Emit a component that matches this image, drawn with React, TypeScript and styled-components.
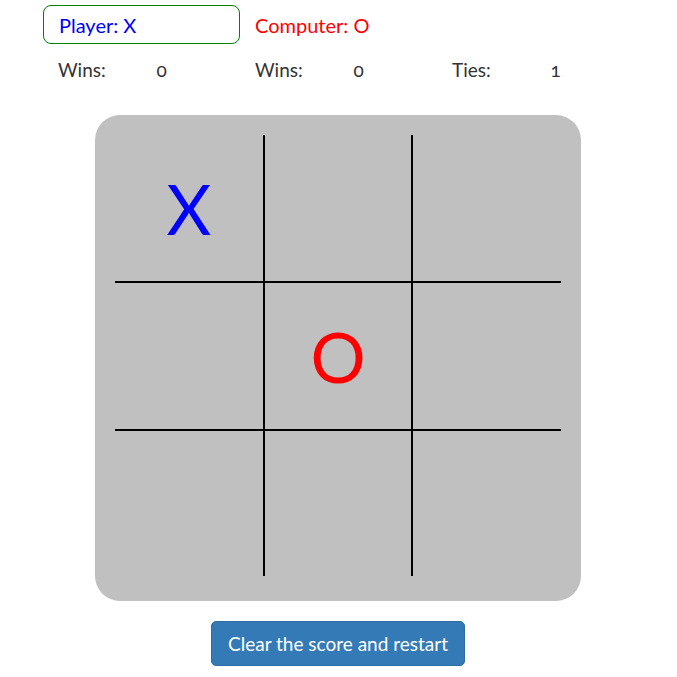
import React from "react";
import styled, { createGlobalStyle } from "styled-components";

const Global = createGlobalStyle`
  html, body { margin: 0; padding: 0; background: #fff; }
  body { font-family: "Lato", "Open Sans", "Liberation Sans", sans-serif; color: #333; }
`;

const Page = styled.div`
  width: 676px;
  padding-top: 5px;
  box-sizing: border-box;
`;

const Header = styled.div`
  display: flex;
  align-items: center;
  gap: 15px;
  padding-left: 43px;
`;

const PlayerBox = styled.div`
  width: 197px;
  height: 39px;
  box-sizing: border-box;
  border: 1px solid #008000;
  border-radius: 8px;
  padding-left: 15px;
  display: flex;
  align-items: center;
  font-size: 20px;
  color: #0000ff;
`;

const Label = styled.div<{ $color: string }>`
  font-size: 20px;
  color: ${(p) => p.$color};
`;

const Scores = styled.div`
  display: grid;
  grid-template-columns: repeat(6, 98.5px);
  padding-left: 58px;
  margin-top: 11px;
  height: 28px;
  align-items: center;
  font-size: 19px;
  color: #333;
`;

const Value = styled.span`
  font-size: 19px;
  font-variant-numeric: oldstyle-nums;
`;

const Board = styled.div`
  width: 486px;
  height: 486px;
  margin: 32px auto 0;
  box-sizing: border-box;
  background: #c0c0c0;
  border-radius: 25px;
  padding: 20px 20px 25px;
`;

const Grid = styled.div`
  display: grid;
  grid-template-columns: 148px 146px 148px;
  grid-template-rows: 146px 146px 145px;
  gap: 2px;
  background: #000;
`;

const Cell = styled.div<{ $mark?: "X" | "O" }>`
  background: #c0c0c0;
  display: flex;
  align-items: center;
  justify-content: center;
  font-size: 69px;
  font-weight: 400;
  line-height: 1;
  color: ${(p) => (p.$mark === "X" ? "#0000ff" : "#ff0000")};
`;

const Footer = styled.div`
  display: flex;
  justify-content: center;
  margin-top: 20px;
`;

const Button = styled.button`
  width: 254px;
  height: 45px;
  background: #337ab7;
  border: 1px solid #2e6da4;
  border-radius: 5px;
  color: #fff;
  font-family: inherit;
  font-size: 19px;
  cursor: pointer;
`;

const cells: ("X" | "O" | undefined)[] = ["X", undefined, undefined, undefined, "O", undefined, undefined, undefined, undefined];

export default function App() {
  return (
    <Page>
      <Global />
      <Header>
        <PlayerBox>Player: X</PlayerBox>
        <Label $color="#ff0000">Computer: O</Label>
      </Header>
      <Scores>
        <span>Wins:</span>
        <Value>0</Value>
        <span>Wins:</span>
        <Value>0</Value>
        <span>Ties:</span>
        <Value>1</Value>
      </Scores>
      <Board>
        <Grid>
          {cells.map((m, i) => (
            <Cell key={i} $mark={m}>
              {m}
            </Cell>
          ))}
        </Grid>
      </Board>
      <Footer>
        <Button>Clear the score and restart</Button>
      </Footer>
    </Page>
  );
}
